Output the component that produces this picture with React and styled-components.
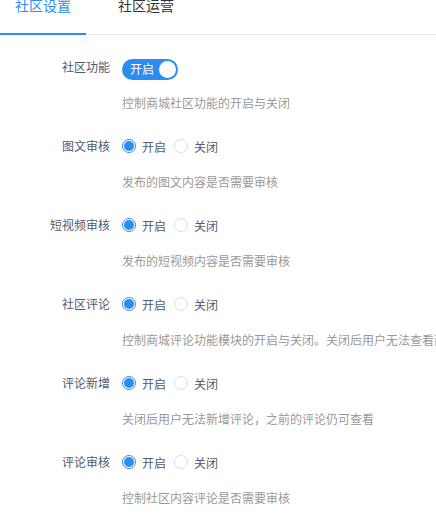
import React, { useState } from 'react';
import styled, { createGlobalStyle } from 'styled-components';

const GlobalStyle = createGlobalStyle`
  html, body {
    margin: 0;
    padding: 0;
    background: #fff;
    overflow: hidden;
  }
  body {
    font-family: "Noto Sans CJK SC", "Noto Sans", sans-serif;
    font-size: 12px;
    color: #515a6e;
  }
`;

const settings = [
  { key: 'community', label: '社区功能', type: 'switch', desc: '控制商城社区功能的开启与关闭' },
  { key: 'post', label: '图文审核', type: 'radio', desc: '发布的图文内容是否需要审核' },
  { key: 'video', label: '短视频审核', type: 'radio', desc: '发布的短视频内容是否需要审核' },
  { key: 'comment', label: '社区评论', type: 'radio', desc: '控制商城评论功能模块的开启与关闭。关闭后用户无法查看商城评论' },
  { key: 'commentAdd', label: '评论新增', type: 'radio', desc: '关闭后用户无法新增评论，之前的评论仍可查看' },
  { key: 'commentAudit', label: '评论审核', type: 'radio', desc: '控制社区内容评论是否需要审核' },
];

export default function App() {
  const [tab, setTab] = useState(0);
  const [values, setValues] = useState(() =>
    settings.reduce((acc, s) => ({ ...acc, [s.key]: true }), {}),
  );

  const update = (key, value) => setValues((v) => ({ ...v, [key]: value }));

  return (
    <Page>
      <GlobalStyle />
      <TabBar>
        {['社区设置', '社区运营'].map((name, i) => (
          <Tab key={name} active={i === tab} onClick={() => setTab(i)}>
            {name}
          </Tab>
        ))}
      </TabBar>
      <Form>
        {settings.map((s) => (
          <FormItem key={s.key}>
            <Label>{s.label}</Label>
            <Control>
              {s.type === 'switch' ? (
                <Switch on={values[s.key]} onClick={() => update(s.key, !values[s.key])}>
                  <SwitchText>{values[s.key] ? '开启' : '关闭'}</SwitchText>
                  <Knob />
                </Switch>
              ) : (
                <RadioGroup>
                  <RadioItem onClick={() => update(s.key, true)}>
                    <RadioCircle checked={values[s.key]} />
                    开启
                  </RadioItem>
                  <RadioItem onClick={() => update(s.key, false)}>
                    <RadioCircle checked={!values[s.key]} />
                    关闭
                  </RadioItem>
                </RadioGroup>
              )}
            </Control>
            <Desc>{s.desc}</Desc>
          </FormItem>
        ))}
      </Form>
    </Page>
  );
}

const Page = styled.div`
  width: 436px;
  overflow: hidden;
`;

const TabBar = styled.div`
  display: flex;
  gap: 17px;
  height: 35px;
  box-sizing: border-box;
  border-bottom: 1px solid #e4e7ed;
`;

const Tab = styled.div`
  height: 35px;
  box-sizing: border-box;
  padding: 0 15px;
  font-size: 14px;
  line-height: 10px;
  color: ${(p) => (p.active ? '#2d8cf0' : '#333')};
  border-bottom: 2px solid ${(p) => (p.active ? '#2d8cf0' : 'transparent')};
  cursor: pointer;
  white-space: nowrap;
`;

const Form = styled.div`
  padding-top: 16px;
`;

const FormItem = styled.div`
  display: grid;
  grid-template-columns: 110px 1fr;
  column-gap: 12px;
  margin-bottom: 17px;
`;

const Label = styled.div`
  height: 32px;
  line-height: 32px;
  text-align: right;
  color: #515a6e;
  white-space: nowrap;
`;

const Control = styled.div`
  height: 32px;
  display: flex;
  align-items: center;
`;

const Desc = styled.div`
  grid-column: 2;
  margin-top: 10px;
  line-height: 20px;
  color: #999;
  white-space: nowrap;
`;

const Switch = styled.div`
  width: 56px;
  height: 21px;
  margin-top: 4px;
  box-sizing: border-box;
  border-radius: 11px;
  background: ${(p) => (p.on ? '#2d8cf0' : '#ccc')};
  display: flex;
  align-items: center;
  justify-content: space-between;
  flex-direction: ${(p) => (p.on ? 'row' : 'row-reverse')};
  padding: 0 2px 0 8px;
  cursor: pointer;
`;

const SwitchText = styled.span`
  color: #fff;
  font-size: 12px;
  line-height: 1;
`;

const Knob = styled.span`
  width: 17px;
  height: 17px;
  border-radius: 50%;
  background: #fff;
`;

const RadioGroup = styled.div`
  display: flex;
  align-items: center;
  gap: 8px;
`;

const RadioItem = styled.label`
  display: flex;
  align-items: center;
  gap: 6px;
  color: #515a6e;
  cursor: pointer;
`;

const RadioCircle = styled.span`
  width: 14px;
  height: 14px;
  box-sizing: border-box;
  border-radius: 50%;
  border: 1px solid ${(p) => (p.checked ? '#2d8cf0' : '#dcdee2')};
  background: #fff;
  display: flex;
  align-items: center;
  justify-content: center;

  &::after {
    content: '';
    width: 10px;
    height: 10px;
    border-radius: 50%;
    background: ${(p) => (p.checked ? '#2d8cf0' : 'transparent')};
  }
`;
